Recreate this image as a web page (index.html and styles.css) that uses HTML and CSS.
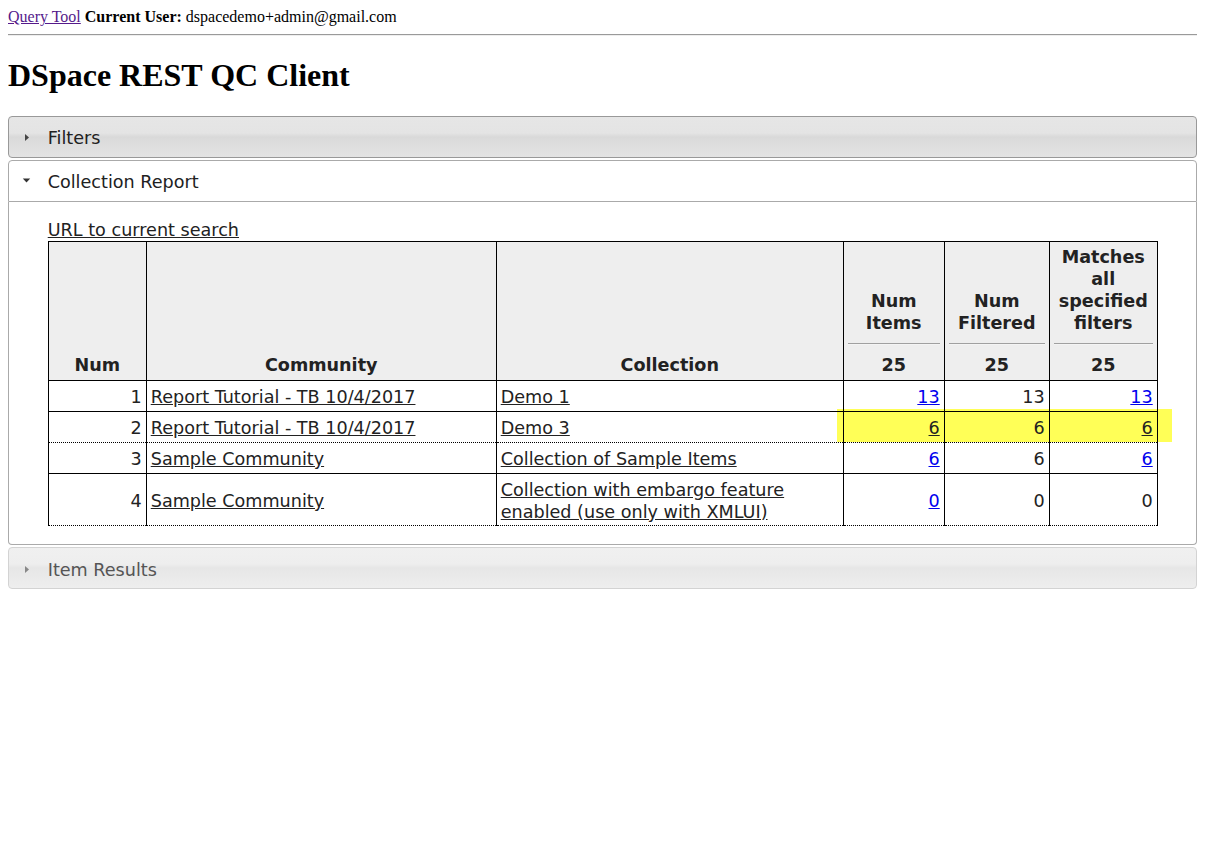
FILE: index.html
```html
<!DOCTYPE html>
<html>
<head>
<meta charset="utf-8">
<title>DSpace REST QC Client</title>
<link rel="stylesheet" href="styles.css">
</head>
<body>
<div class="topbar"><a href="#" class="visited">Query Tool</a> <b>Current User:</b> dspacedemo+admin@gmail.com</div>
<hr class="rule">
<h1 class="title">DSpace REST QC Client</h1>
<div class="accordion">
  <h3 class="acc-head hover">
    <svg class="icon" width="16" height="16" viewBox="0 0 16 16"><path d="M7 5 L11 8.5 L7 12 Z" fill="#454545"/></svg>
    <span>Filters</span>
  </h3>
  <h3 class="acc-head active">
    <svg class="icon" width="16" height="16" viewBox="0 0 16 16"><path d="M4.8 5.6 H12.2 L8.5 9.4 Z" fill="#333"/></svg>
    <span>Collection Report</span>
  </h3>
  <div class="acc-content">
    <a href="#" class="plain-link">URL to current search</a>
    <div class="table-wrap">
      <div class="highlight"></div>
      <table class="report">
        <colgroup>
          <col class="c-num"><col class="c-comm"><col class="c-coll"><col class="c-items"><col class="c-filt"><col class="c-match">
        </colgroup>
        <thead>
          <tr>
            <th>Num</th>
            <th>Community</th>
            <th>Collection</th>
            <th><div>Num Items</div><hr class="sep"><div>25</div></th>
            <th><div>Num Filtered</div><hr class="sep"><div>25</div></th>
            <th><div>Matches all specified filters</div><hr class="sep"><div>25</div></th>
          </tr>
        </thead>
        <tbody>
          <tr>
            <td class="n">1</td>
            <td><a href="#" class="plain-link">Report Tutorial - TB 10/4/2017</a></td>
            <td><a href="#" class="plain-link">Demo 1</a></td>
            <td class="n"><a href="#" class="blue">13</a></td>
            <td class="n">13</td>
            <td class="n"><a href="#" class="blue">13</a></td>
          </tr>
          <tr class="dot-below">
            <td class="n">2</td>
            <td><a href="#" class="plain-link">Report Tutorial - TB 10/4/2017</a></td>
            <td><a href="#" class="plain-link">Demo 3</a></td>
            <td class="n"><a href="#" class="plain-link">6</a></td>
            <td class="n">6</td>
            <td class="n"><a href="#" class="plain-link">6</a></td>
          </tr>
          <tr class="dot-above">
            <td class="n">3</td>
            <td><a href="#" class="plain-link">Sample Community</a></td>
            <td><a href="#" class="plain-link">Collection of Sample Items</a></td>
            <td class="n"><a href="#" class="blue">6</a></td>
            <td class="n">6</td>
            <td class="n"><a href="#" class="blue">6</a></td>
          </tr>
          <tr class="dot-below tall">
            <td class="n">4</td>
            <td><a href="#" class="plain-link">Sample Community</a></td>
            <td><a href="#" class="plain-link">Collection with embargo feature enabled (use only with XMLUI)</a></td>
            <td class="n"><a href="#" class="blue">0</a></td>
            <td class="n">0</td>
            <td class="n">0</td>
          </tr>
        </tbody>
      </table>
    </div>
  </div>
  <h3 class="acc-head default">
    <svg class="icon" width="16" height="16" viewBox="0 0 16 16"><path d="M7 5 L11 8.5 L7 12 Z" fill="#888"/></svg>
    <span>Item Results</span>
  </h3>
</div>
</body>
</html>
```

FILE: styles.css
```css
body {
  margin: 8px;
  font-family: "Liberation Serif", "Times New Roman", serif;
  font-size: 16px;
  color: #000;
  background: #fff;
}

.topbar {
  line-height: 18px;
}

.visited {
  color: #551a8b;
  text-decoration: underline;
}

.rule {
  height: 0;
  border: 0;
  border-top: 1px solid #9a9a9a;
  border-bottom: 1px solid #eeeeee;
  margin: 8px 0;
}

.title {
  font-size: 32px;
  font-weight: bold;
  margin: 21.44px 0;
  line-height: 37px;
}

.accordion {
  font-family: "DejaVu Sans", Verdana, sans-serif;
  font-size: 17.6px;
  color: #222;
}

.acc-head {
  display: flex;
  align-items: center;
  margin: 2px 0 0 0;
  padding: 10.4px 8.8px 7.2px 0;
  font-size: 17.6px;
  font-weight: normal;
  line-height: 22.4px;
  border-radius: 4px;
  border: 1px solid #d3d3d3;
  cursor: pointer;
}

.acc-head:first-child {
  margin-top: 0;
}

.icon {
  flex: none;
  margin-left: 8.8px;
  margin-right: 13.9px;
  position: relative;
  top: -1.4px;
}

.acc-head.hover {
  border-color: #999999;
  color: #212121;
  background: linear-gradient(to bottom, #e6e6e6 0%, #e4e4e4 40%, #d9d9d9 50%, #dcdcdc 60%, #e4e4e4 100%);
}

.acc-head.active {
  border-color: #aaaaaa;
  color: #212121;
  background: #ffffff;
  border-bottom-left-radius: 0;
  border-bottom-right-radius: 0;
}

.acc-head.default {
  border-color: #d3d3d3;
  color: #555555;
  background: linear-gradient(to bottom, #f0f0f0 0%, #eeeeee 40%, #e6e6e6 50%, #e8e8e8 60%, #eeeeee 100%);
}

.acc-content {
  border: 1px solid #aaaaaa;
  border-top: 0;
  border-radius: 0 0 4px 4px;
  padding: 17.6px 38.72px 18.4px;
  background: #fff;
  color: #222;
  line-height: 22px;
}

.plain-link {
  color: #222;
  text-decoration: underline;
}

.blue {
  color: #0000ee;
  text-decoration: underline;
}

.table-wrap {
  position: relative;
}

.highlight {
  position: absolute;
  left: 789px;
  top: 168px;
  width: 335px;
  height: 33px;
  background: #ffff57;
  z-index: 0;
}

.report {
  position: relative;
  z-index: 1;
  width: 100%;
  table-layout: fixed;
  border-collapse: collapse;
  font-size: 17.6px;
  line-height: 22px;
  color: #222;
}

.c-num { width: 98px; }
.c-comm { width: 350px; }
.c-coll { width: 347px; }
.c-items { width: 101px; }
.c-filt { width: 105px; }
.c-match { width: 108px; }

.report th {
  background: #eeeeee;
  border: 1px solid #000;
  padding: 4px;
  font-weight: bold;
  text-align: center;
  vertical-align: bottom;
}

.report td {
  border: 1px solid #000;
  padding: 4.5px 4px 3.5px 4px;
  text-align: left;
  vertical-align: middle;
}

.report tr.tall td {
  padding: 4.5px 4px 2.5px 4px;
}

.report td.n {
  text-align: right;
}

.report tr.dot-below td {
  border-bottom-style: dotted;
}

.report tr.dot-above td {
  border-top-style: dotted;
}

.sep {
  height: 0;
  border: 0;
  border-top: 1px solid #a0a0a0;
  border-bottom: 1px solid #f4f4f4;
  margin: 8.8px 0;
}
```
